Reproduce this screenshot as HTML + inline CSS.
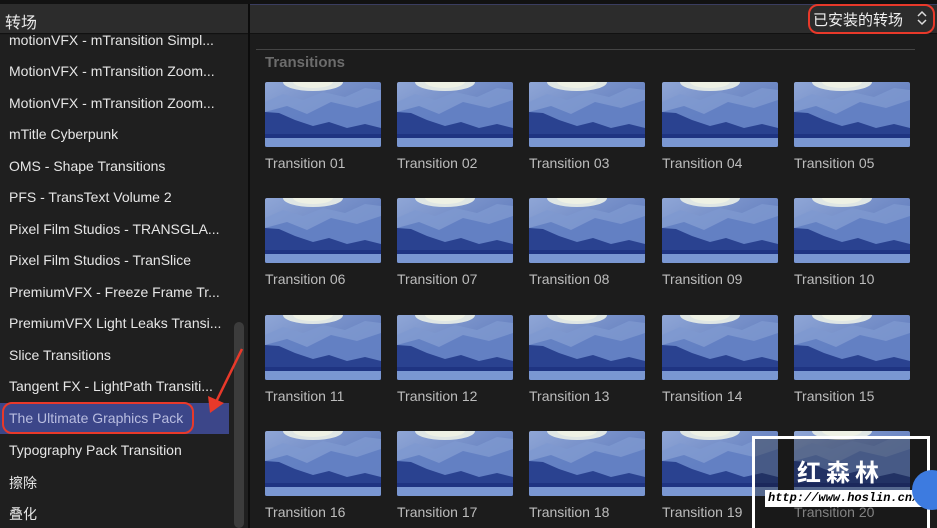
<!DOCTYPE html>
<html><head><meta charset="utf-8"><style>
*{margin:0;padding:0;box-sizing:border-box}
body{width:937px;height:528px;overflow:hidden;background:#1c1c1c;font-family:"Liberation Sans","Noto Sans CJK SC",sans-serif;position:relative}
.top{position:absolute;left:0;top:0;width:937px;height:4px;background:#121212}
.hdr{position:absolute;top:4px;height:30px;background:#2c2c2c;border-bottom:1px solid #111}
.left{position:absolute;left:0;top:35px;width:248px;height:493px;background:#1f1f1f}
.div{position:absolute;left:248px;top:4px;width:2px;height:524px;background:#0c0c0c}
.item{position:absolute;left:9px;font-size:14px;color:#e6e6e6;white-space:nowrap}
.sb{position:absolute;left:234px;top:322px;width:10px;height:206px;background:#3c3c3c;border-radius:5px}
.th{position:absolute;width:116px;height:65px;border-radius:2px;overflow:hidden}
.lb{position:absolute;font-size:14px;color:#bdbdbd}
</style></head><body>
<svg width="0" height="0" style="position:absolute"><defs>
<linearGradient id="sk" x1="0" y1="0" x2="1" y2="1"><stop offset="0" stop-color="#8fa6d6"/><stop offset="1" stop-color="#4e6bb3"/></linearGradient>
<symbol id="t" viewBox="0 0 116 65">
<rect width="116" height="65" fill="url(#sk)"/>
<ellipse cx="48" cy="0" rx="30" ry="9" fill="#dfe6e4"/>
<ellipse cx="48" cy="0" rx="20" ry="6" fill="#eef1e4"/>
<path d="M0 20 L18 12 L38 18 L58 10 L80 15 L100 6 L116 8 L116 65 L0 65Z" fill="#7e98cf" opacity=".8"/>
<path d="M0 30 L22 24 L42 32 L66 20 L92 26 L116 18 L116 65 L0 65Z" fill="#5f7dc1" opacity=".85"/>
<path d="M0 30 L14 31 L30 38 L48 44 L64 40 L82 46 L100 42 L116 46 L116 65 L0 65Z" fill="#2a4290"/>
<rect y="52" width="116" height="4" fill="#1f3482"/>
<rect y="56" width="116" height="9" fill="#7a97d2"/>
</symbol></defs></svg>
<div class="top"></div>
<div class="hdr" style="left:0;width:248px"><span style="position:absolute;left:5px;top:5px;font-size:16px;color:#e8e8e8">转场</span></div>
<div class="hdr" style="left:250px;width:687px;border-top:1px solid #3a3d60"></div>
<div style="position:absolute;left:808px;top:4px;width:127px;height:30px;border:2px solid #e8392a;border-radius:10px"></div>
<span style="position:absolute;left:813px;top:9px;font-size:15px;color:#f0f0f0">已安装的转场</span>
<svg style="position:absolute;left:916px;top:10px" width="12" height="16"><path d="M2 6 L6 2 L10 6 M2 10 L6 14 L10 10" stroke="#ddd" stroke-width="1.5" fill="none"/></svg>
<div class="left"></div>
<div style="position:absolute;left:0;top:403px;width:229px;height:31px;background:#3c4689"></div>
<div class="item" style="top:32px">motionVFX - mTransition Simpl...</div>
<div class="item" style="top:63px">MotionVFX - mTransition Zoom...</div>
<div class="item" style="top:95px">MotionVFX - mTransition Zoom...</div>
<div class="item" style="top:126px">mTitle Cyberpunk</div>
<div class="item" style="top:158px">OMS - Shape Transitions</div>
<div class="item" style="top:189px">PFS - TransText Volume 2</div>
<div class="item" style="top:221px">Pixel Film Studios - TRANSGLA...</div>
<div class="item" style="top:252px">Pixel Film Studios - TranSlice</div>
<div class="item" style="top:284px">PremiumVFX - Freeze Frame Tr...</div>
<div class="item" style="top:315px">PremiumVFX Light Leaks Transi...</div>
<div class="item" style="top:347px">Slice Transitions</div>
<div class="item" style="top:378px">Tangent FX - LightPath Transiti...</div>
<div class="item" style="top:410px;color:#b9bde0">The Ultimate Graphics Pack</div>
<div class="item" style="top:442px">Typography Pack Transition</div>
<div class="item" style="top:473px">擦除</div>
<div class="item" style="top:504px">叠化</div>
<div style="position:absolute;left:2px;top:402px;width:192px;height:32px;border:2px solid #e8392a;border-radius:10px"></div>
<div class="sb"></div>
<svg style="position:absolute;left:200px;top:340px" width="50" height="80"><line x1="42" y1="9" x2="16" y2="62" stroke="#e8392a" stroke-width="2.5"/><path d="M10 73 L8 56 L24 63Z" fill="#e8392a"/></svg>
<div class="div"></div>
<div style="position:absolute;left:256px;top:49px;width:659px;height:1px;background:#444"></div>
<div style="position:absolute;left:265px;top:54px;font-size:15px;font-weight:bold;color:#6c6c6c">Transitions</div>
<div id="g"></div>
<script>
var h='',n=1,xs=[265,397,529,662,794],ys=[82,198,315,431];
for(var r=0;r<4;r++)for(var c=0;c<5;c++){var x=xs[c],y=ys[r];
h+='<svg class="th" style="left:'+x+'px;top:'+y+'px" viewBox="0 0 116 65"><use href="#t" width="116" height="65"/></svg>';
h+='<div class="lb" style="left:'+x+'px;top:'+(y+73)+'px">Transition '+(n<10?'0':'')+n+'</div>';n++;}
document.getElementById('g').innerHTML=h;
</script>
<div style="position:absolute;left:752px;top:436px;width:178px;height:92px;border:3px solid #fff;border-bottom:none;background:rgba(20,20,20,.35)"></div>
<div style="position:absolute;left:797px;top:453px;font-size:24px;font-weight:bold;color:#fff;letter-spacing:5px">红森林</div>
<div style="position:absolute;left:765px;top:490px;width:158px;height:17px;background:#fff;color:#000;font-family:'Liberation Mono',monospace;font-style:italic;font-weight:bold;font-size:12px;line-height:17px;padding-left:3px;white-space:nowrap;overflow:hidden">http://www.hoslin.cn/</div>
<div style="position:absolute;left:912px;top:470px;width:40px;height:40px;border-radius:50%;background:#3d7be0"></div>
</body></html>
